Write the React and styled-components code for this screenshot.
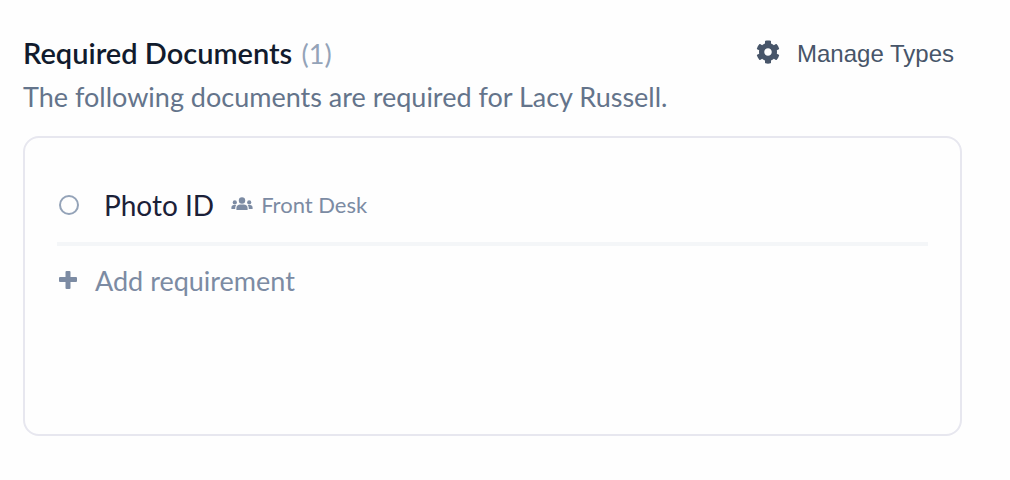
import React from "react";
import styled, { createGlobalStyle } from "styled-components";
import { FaCog } from "react-icons/fa";

const documents = [{ id: "photo-id", name: "Photo ID", location: "Front Desk" }];

const GroupIcon = () => (
  <svg width="22" height="18" viewBox="0 0 22 18" fill="currentColor" aria-hidden="true">
    <circle cx="11" cy="4.5" r="3.2" />
    <circle cx="3.8" cy="6.4" r="2.1" />
    <circle cx="18.2" cy="6.4" r="2.1" />
    <path d="M5.4 14v-2c0-2.2 1.6-3.6 3.9-3.6h3.4c2.3 0 3.9 1.4 3.9 3.6v2z" />
    <path d="M.4 13v-1.6C.4 9.9 1.4 9 2.8 9h2.5c-.8.9-1.1 2.2-1.1 4z" />
    <path d="M21.6 13v-1.6c0-1.5-1-2.4-2.4-2.4h-2.5c.8.9 1.1 2.2 1.1 4z" />
  </svg>
);

const PlusIcon = () => (
  <svg width="18" height="20" viewBox="0 0 18 20" fill="currentColor" aria-hidden="true">
    <rect x="0" y="6" width="18" height="5" rx="1" />
    <rect x="6.5" y="0" width="5" height="18" rx="1" />
  </svg>
);

const App = () => {
  return (
    <>
      <GlobalStyle />
      <Page>
        <Header>
          <Title>
            Required Documents <Count>({documents.length})</Count>
          </Title>
          <ManageButton type="button">
            <FaCog size={24} />
            Manage Types
          </ManageButton>
        </Header>
        <Description>
          The following documents are required for Lacy Russell.
        </Description>
        <Card>
          <List>
            {documents.map((doc) => (
              <Row key={doc.id}>
                <Radio type="radio" id={doc.id} name="document" />
                <Name htmlFor={doc.id}>{doc.name}</Name>
                <Location>
                  <GroupIcon />
                  {doc.location}
                </Location>
              </Row>
            ))}
          </List>
          <AddButton type="button">
            <PlusIcon />
            Add requirement
          </AddButton>
        </Card>
      </Page>
    </>
  );
};

const GlobalStyle = createGlobalStyle`
  * {
    box-sizing: border-box;
  }

  body {
    margin: 0;
    background-color: #fefefe;
    font-family: Lato, sans-serif;
  }
`;

const Page = styled.main`
  padding: 35px 48px 44px 23px;
`;

const Header = styled.header`
  display: flex;
  justify-content: space-between;
  align-items: center;
  padding-right: 8px;
`;

const Title = styled.h2`
  margin: 0;
  color: #111b2d;
  font-size: 29px;
  font-weight: 600;
  line-height: 36px;
`;

const Count = styled.span`
  margin-left: 2px;
  color: #94a3b8;
  font-size: 27px;
  font-weight: 400;
`;

const ManageButton = styled.button`
  display: flex;
  align-items: flex-start;
  gap: 17px;
  padding: 0;
  border: none;
  background: none;
  color: #475569;
  font-family: "Liberation Sans", sans-serif;
  font-size: 24px;
  line-height: 28px;
  cursor: pointer;
`;

const Description = styled.p`
  margin: 7px 0 21px;
  color: #64748b;
  font-size: 27px;
  line-height: 36px;
`;

const Card = styled.section`
  min-height: 300px;
  padding: 32px;
  border: 2px solid #e7e7ef;
  border-radius: 16px;
`;

const List = styled.ul`
  margin: 0;
  padding: 0;
  list-style: none;
`;

const Row = styled.li`
  display: flex;
  align-items: center;
  padding: 17px 0 19px;
  border-bottom: 4px solid #f4f6f8;
`;

const Radio = styled.input`
  appearance: none;
  width: 20px;
  height: 20px;
  margin: 0 25px 0 2px;
  border: 2px solid #94a3b8;
  border-radius: 50%;
`;

const Name = styled.label`
  color: #1b2138;
  font-size: 28px;
  line-height: 36px;
`;

const Location = styled.span`
  display: flex;
  align-items: center;
  gap: 8px;
  margin-left: 17px;
  color: #7c8ba3;
  font-size: 22px;
  line-height: 36px;
`;

const AddButton = styled.button`
  display: flex;
  align-items: center;
  gap: 18px;
  margin-top: 17px;
  padding: 0 2px;
  border: none;
  background: none;
  color: #7c8ba3;
  font-family: Lato, sans-serif;
  font-size: 27px;
  line-height: 36px;
  cursor: pointer;
`;

export default App;
